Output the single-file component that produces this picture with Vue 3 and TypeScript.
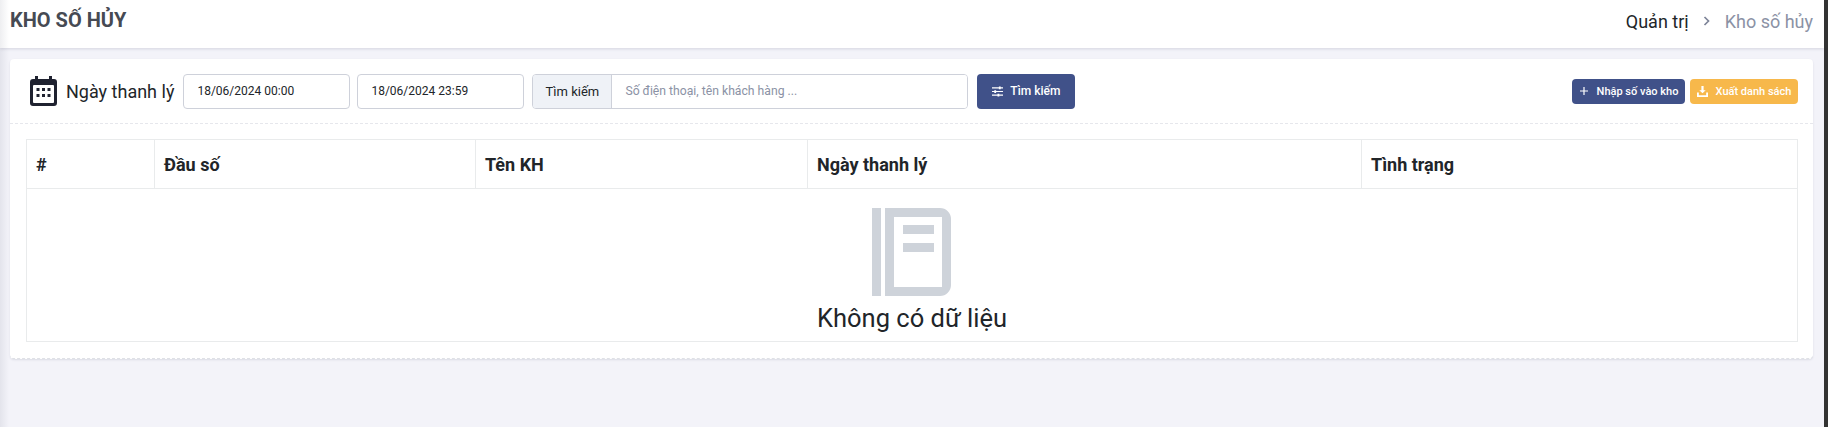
<script setup lang="ts">
const columns = [
  { label: '#', width: 128 },
  { label: 'Đầu số', width: 321 },
  { label: 'Tên KH', width: 332 },
  { label: 'Ngày thanh lý', width: 554 },
  { label: 'Tình trạng', width: 436 },
];
</script>

<template>
  <div class="page">
    <div class="main">
      <header class="topbar">
        <h1 class="topbar__title">KHO SỐ HỦY</h1>
        <nav class="crumbs">
          <span class="crumbs__root">Quản trị</span>
          <svg class="crumbs__sep" width="8" height="12" viewBox="0 0 8 12" fill="none">
            <path d="M1.500 2l4 4-4 4" stroke="#7d8498" stroke-width="1.700" />
          </svg>
          <span class="crumbs__current">Kho số hủy</span>
        </nav>
      </header>

      <main class="content">
        <section class="card">
          <div class="toolbar">
            <svg class="cal" width="27" height="30" viewBox="0 0 27 30">
              <path
                d="M5 0h3v3h11V0h3v3h2a3 3 0 0 1 3 3v21a3 3 0 0 1-3 3H3a3 3 0 0 1-3-3V6a3 3 0 0 1 3-3h2z"
                fill="#1f2230"
              />
              <rect x="3" y="9" width="21" height="18" rx="1" fill="#fff" />
              <g fill="#1f2230">
                <rect x="6.500" y="12" width="3" height="3" />
                <rect x="12" y="12" width="3" height="3" />
                <rect x="17.500" y="12" width="3" height="3" />
                <rect x="6.500" y="18" width="3" height="3" />
                <rect x="12" y="18" width="3" height="3" />
                <rect x="17.500" y="18" width="3" height="3" />
              </g>
            </svg>
            <span class="toolbar__label">Ngày thanh lý</span>
            <input class="field field--date" value="18/06/2024 00:00" />
            <input class="field field--date field--last" value="18/06/2024 23:59" />
            <div class="search">
              <span class="search__addon">Tìm kiếm</span>
              <input class="search__input" placeholder="Số điện thoại, tên khách hàng ..." />
            </div>
            <button class="btn btn--search">
              <svg width="11" height="11" viewBox="0 0 12 12" fill="none" stroke="#fff" stroke-width="1.200">
                <path d="M0 2h12M0 6h12M0 10h12" />
                <path d="M8.500 .5v3M3.500 4.500v3M7 8.500v3" stroke-width="2" />
              </svg>
              Tìm kiếm
            </button>
            <div class="toolbar__actions">
              <button class="btn btn--small btn--primary">
                <svg width="10" height="10" viewBox="0 0 10 10" stroke="#fff" stroke-width="1.200">
                  <path d="M5 1v8M1 5h8" />
                </svg>
                Nhập số vào kho
              </button>
              <button class="btn btn--small btn--warning">
                <svg width="11" height="11" viewBox="0 0 12 12" fill="#fff">
                  <path d="M4.800 0h2.400v4.500H9.500L6 8 2.500 4.500h2.300z" />
                  <path d="M0 7h2v3h8V7h2v5H0z" />
                </svg>
                Xuất danh sách
              </button>
            </div>
          </div>

          <div class="body">
            <table class="table">
              <colgroup>
                <col v-for="col in columns" :key="col.label" :style="{ width: col.width + 'px' }" />
              </colgroup>
              <thead>
                <tr>
                  <th v-for="col in columns" :key="col.label">{{ col.label }}</th>
                </tr>
              </thead>
              <tbody>
                <tr>
                  <td :colspan="columns.length">
                    <div class="empty">
                      <svg class="empty__icon" width="80" height="88" viewBox="0 0 80 88">
                        <rect x="0" y="0" width="9" height="88" fill="#ced3da" />
                        <path
                          fill-rule="evenodd"
                          fill="#ced3da"
                          d="M13 0h55a11 11 0 0 1 11 11v66a11 11 0 0 1-11 11H13zM22 9v70h48V9z"
                        />
                        <rect x="31" y="17" width="31" height="9" fill="#ced3da" />
                        <rect x="31" y="35" width="31" height="9" fill="#ced3da" />
                      </svg>
                      <div class="empty__text">Không có dữ liệu</div>
                    </div>
                  </td>
                </tr>
              </tbody>
            </table>
          </div>
        </section>
      </main>
    </div>
    <div class="edge"></div>
  </div>
</template>

<style>
html,
body {
  margin: 0;
  background: #f3f3f9;
}
</style>

<style scoped>
.page {
  position: relative;
  display: flex;
  height: 427px;
  overflow: hidden;
  background: #f3f3f9;
  font-family: Roboto, "Noto Sans", sans-serif;
  color: #212529;
}

/* soft shadow cast by the sidebar, which is outside the crop */
.page::before {
  content: "";
  position: absolute;
  top: 0;
  bottom: 0;
  left: 0;
  z-index: 2;
  width: 9px;
  background: linear-gradient(to right, rgba(70, 75, 100, 0.09), rgba(70, 75, 100, 0));
  pointer-events: none;
}

.main {
  flex: 1;
  min-width: 0;
}

.edge {
  flex: none;
  width: 4px;
  background: #333;
}

.topbar {
  display: flex;
  align-items: center;
  justify-content: space-between;
  height: 48px;
  padding: 0 11px 0 10px;
  background: #fff;
  box-shadow: 0 1px 3px rgba(90, 95, 120, 0.2);
}

.topbar__title {
  margin: 0 0 9px;
  font-size: 20px;
  font-weight: 700;
  color: #464a53;
}

.crumbs {
  display: flex;
  align-items: center;
  gap: 14px;
  margin-bottom: 6px;
  font-size: 18px;
}

.crumbs__root {
  color: #212529;
}

.crumbs__current {
  color: #8b92a5;
}

.content {
  padding: 11px 11px 0 10px;
}

.card {
  background: #fff;
  border-radius: 4px;
  box-shadow: 0 1px 2px rgba(90, 95, 120, 0.15);
  border-bottom: 1px dashed #dfe1e6;
}

.toolbar {
  display: flex;
  align-items: center;
  height: 65px;
  padding: 0 15px 0 20px;
  box-sizing: border-box;
  border-bottom: 1px dashed #e6e7ec;
}

.cal {
  flex: none;
}

.toolbar__label {
  margin: 0 9px 0 9px;
  font-size: 18px;
  white-space: nowrap;
}

.field,
.search__input {
  box-sizing: border-box;
  font-family: inherit;
  font-size: 12px;
  color: #212529;
  background: #fff;
  outline: none;
}

.field--date {
  width: 167px;
  height: 35px;
  margin-right: 7px;
  padding: 0 13px;
  border: 1px solid #ced1da;
  border-radius: 4px;
}

.field--last {
  margin-right: 8px;
}

.search {
  display: flex;
  width: 436px;
  height: 35px;
  margin-right: 9px;
  box-sizing: border-box;
  border: 1px solid #ced1da;
  border-radius: 4px;
  overflow: hidden;
}

.search__addon {
  display: flex;
  align-items: center;
  flex: none;
  width: 79px;
  box-sizing: border-box;
  justify-content: center;
  font-size: 13px;
  background: #eff2f7;
  border-right: 1px solid #ced1da;
}

.search__input {
  flex: 1;
  min-width: 0;
  padding: 0 14px 0 13px;
  border: 0;
  font-size: 12.2px;
}

.search__input::placeholder {
  color: #8b92a5;
  opacity: 1;
}

.btn {
  display: inline-flex;
  align-items: center;
  justify-content: center;
  border: 0;
  border-radius: 4px;
  color: #fff;
  font-family: inherit;
  font-weight: 500;
}

.btn--search {
  gap: 7px;
  width: 98px;
  height: 35px;
  padding: 0;
  font-size: 12px;
  background: #405189;
}

.toolbar__actions {
  display: flex;
  gap: 5px;
  margin-left: auto;
}

.btn--small {
  gap: 8px;
  height: 25px;
  padding: 0;
  font-size: 11px;
}

.btn--primary {
  width: 113px;
  background: #405189;
}

.btn--warning {
  width: 108px;
  background: #f7b84b;
}

.body {
  padding: 15px 16px 16px 16px;
}

.table {
  width: 100%;
  table-layout: fixed;
  border-collapse: collapse;
  border: 1px solid #e9ebec;
}

.table th {
  height: 49px;
  padding: 0 9px;
  box-sizing: border-box;
  text-align: left;
  font-size: 18px;
  font-weight: 700;
  border: 1px solid #e9ebec;
}

.empty {
  display: flex;
  flex-direction: column;
  align-items: center;
  padding: 18px 0 8px;
}

.empty__icon {
  display: block;
}

.empty__text {
  margin-top: 8px;
  font-size: 25.500px;
  line-height: 28px;
  color: #212529;
}
</style>
